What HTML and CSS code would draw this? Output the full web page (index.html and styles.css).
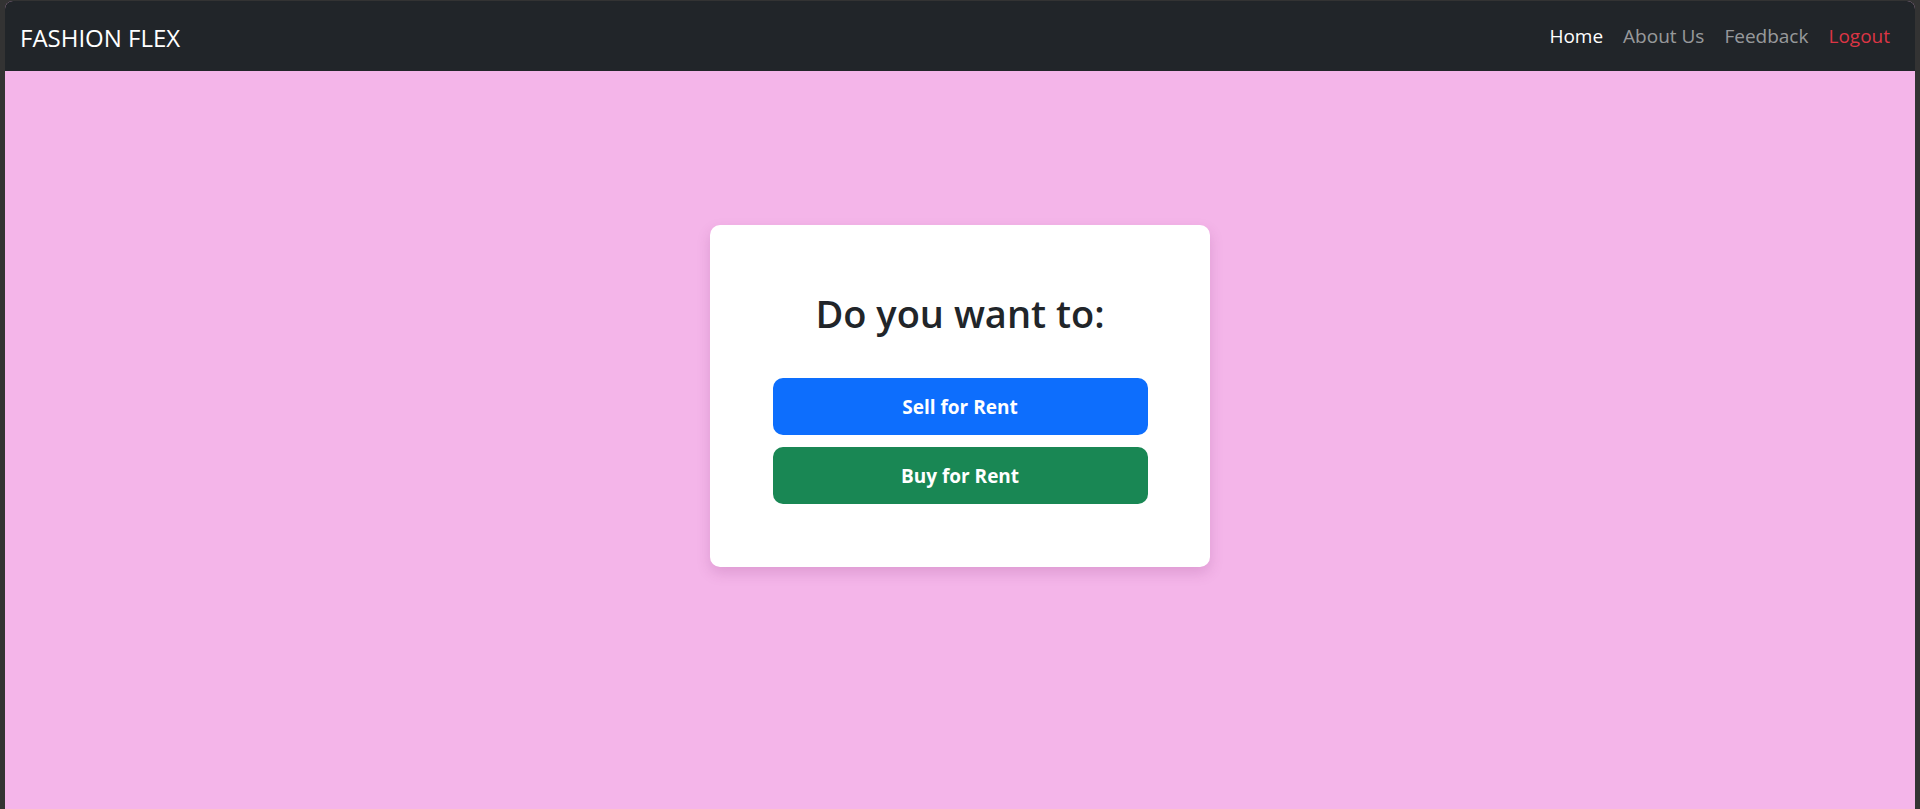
FILE: index.html
```html
<!DOCTYPE html>
<html lang="en">
<head>
<meta charset="utf-8">
<title>Fashion Flex</title>
<link rel="stylesheet" href="styles.css">
</head>
<body>
<div class="window">
  <nav class="navbar">
    <a class="brand" href="#">FASHION FLEX</a>
    <ul class="nav">
      <li><a class="nav-link active" href="#">Home</a></li>
      <li><a class="nav-link" href="#">About Us</a></li>
      <li><a class="nav-link" href="#">Feedback</a></li>
      <li><a class="nav-link logout" href="#">Logout</a></li>
    </ul>
  </nav>
  <main class="main">
    <div class="card">
      <h2 class="title">Do you want to:</h2>
      <div class="actions">
        <a class="btn btn-blue" href="#">Sell for Rent</a>
        <a class="btn btn-green" href="#">Buy for Rent</a>
      </div>
    </div>
  </main>
</div>
</body>
</html>
```

FILE: styles.css
```css
* { box-sizing: border-box; }
html, body { margin: 0; padding: 0; }
body {
  background: #333333;
  font-family: "Open Sans", "Noto Sans", sans-serif;
  height: 809px;
  overflow: hidden;
}
.window {
  margin: 1px 5px 0 5px;
  height: 808px;
  border-radius: 8px 8px 0 0;
  overflow: hidden;
  background: #f4b5e9;
  display: flex;
  flex-direction: column;
}
.navbar {
  height: 70px;
  background: #212529;
  display: flex;
  align-items: center;
  justify-content: space-between;
  padding: 0 15px;
}
.brand {
  color: #ffffff;
  text-decoration: none;
  font-size: 24px;
  padding-top: 2px;
}
.nav {
  list-style: none;
  margin: 0;
  padding: 0;
  display: flex;
}
.nav-link {
  display: block;
  padding: 0 10px;
  font-size: 19px;
  text-decoration: none;
  color: rgba(255,255,255,0.55);
}
.nav-link.active { color: #ffffff; }
.nav-link.logout { color: #dc3545; }
.main {
  flex: 1;
  display: flex;
  flex-direction: column;
  align-items: center;
  padding-top: 154px;
}
.card {
  width: 500px;
  height: 342px;
  background: #ffffff;
  border-radius: 10px;
  box-shadow: 0 6px 14px rgba(120, 40, 110, 0.18);
  padding-top: 64px;
  display: flex;
  flex-direction: column;
  align-items: center;
}
.title {
  margin: 0;
  font-size: 38px;
  font-weight: 600;
  line-height: 48px;
  color: #212529;
}
.actions {
  margin-top: 41px;
  width: 375px;
  display: flex;
  flex-direction: column;
  gap: 12px;
}
.btn {
  height: 57px;
  border-radius: 10px;
  display: flex;
  align-items: center;
  justify-content: center;
  color: #ffffff;
  font-weight: 700;
  font-size: 19px;
  text-decoration: none;
}
.btn-blue { background: #0d6efd; }
.btn-green { background: #198754; }
```
